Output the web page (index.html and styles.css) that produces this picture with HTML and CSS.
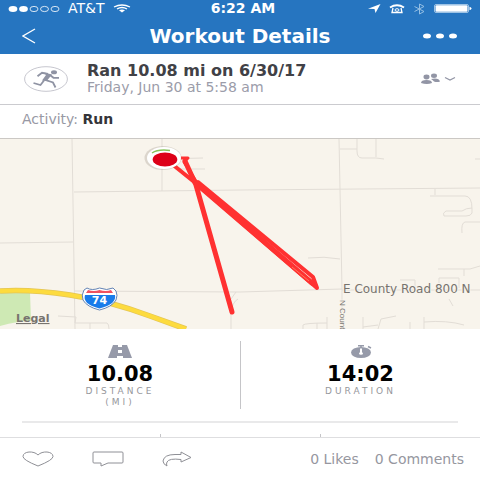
FILE: index.html
```html
<!DOCTYPE html>
<html lang="en">
<head>
<meta charset="utf-8">
<meta name="viewport" content="width=device-width, initial-scale=1">
<title>Workout Details</title>
<link rel="stylesheet" href="styles.css">
</head>
<body>
<header class="top">
  <div class="status">
    <div class="carrier">
      <svg width="52" height="8" viewBox="0 0 52 8" aria-hidden="true">
        <g fill="#fff"><ellipse cx="5" cy="4" rx="4.4" ry="3"/><ellipse cx="15.500" cy="4" rx="4.400" ry="3"/></g>
        <g fill="none" stroke="#fff" stroke-width=".8"><ellipse cx="26" cy="4" rx="4" ry="2.600"/><ellipse cx="36.500" cy="4" rx="4" ry="2.600"/><ellipse cx="47" cy="4" rx="4" ry="2.600"/></g>
      </svg>
      <span>AT&amp;T</span>
      <svg width="18" height="9" viewBox="0 0 18 9" fill="none" stroke="#fff" aria-hidden="true">
        <path d="M1 3Q9-1 17 3" stroke-width="1.300"/><path d="M4 5Q9 2 14 5" stroke-width="1.400"/><path d="M6 6.300Q9 4.600 12 6.300L9 8.500Z" fill="#fff" stroke="none"/>
      </svg>
    </div>
    <span class="clock">6:22 AM</span>
    <div class="indicators">
      <svg width="13" height="9" viewBox="0 0 13 9" aria-hidden="true"><path d="M0 4.700 12.500 0 7.500 9 6.500 5Z" fill="#fff"/></svg>
      <svg width="16" height="10" viewBox="0 0 16 10" fill="none" stroke="#fff" aria-hidden="true"><path d="M1 3.500Q8-1 15 3.500" stroke-width="2"/><path d="M4 4 3 8.500H13L12 4" stroke-width="1.300"/><ellipse cx="8" cy="6" rx="2" ry="1.300"/></svg>
      <svg width="13" height="12" viewBox="0 0 13 12" fill="none" stroke="#94bfe4" aria-hidden="true"><path d="M1.500 3.500 11 8.500 6.500 11V1L11 3.500 1.500 8.500"/></svg>
      <svg width="38" height="9" viewBox="0 0 38 9" aria-hidden="true"><rect x=".5" y=".5" width="34" height="8" rx="1.500" fill="none" stroke="#d3e5f5" stroke-width=".7"/><rect x="1.500" y="1.300" width="32" height="6.400" rx="1" fill="#fff"/><path d="M35.500 2.800Q37.500 3.200 37.500 4.500T35.500 6.200Z" fill="#fff"/></svg>
    </div>
  </div>
  <nav class="nav">
    <button class="icon-button back" aria-label="Back"><svg width="14" height="16" viewBox="0 0 14 16" fill="none" stroke="#fff" stroke-width="1.300"><path d="M13 1 1 8 13 15"/></svg></button>
    <h1>Workout Details</h1>
    <button class="icon-button more" aria-label="More options"><svg width="36" height="6" viewBox="0 0 36 6" fill="#fff"><ellipse cx="5" cy="3" rx="4" ry="2.500"/><ellipse cx="18" cy="3" rx="4" ry="2.500"/><ellipse cx="31" cy="3" rx="4" ry="2.500"/></svg></button>
  </nav>
</header>
<main>
  <section class="summary">
    <svg width="44" height="26" viewBox="0 0 44 26" fill="none" aria-hidden="true">
      <ellipse cx="22" cy="13" rx="21.400" ry="12.300" stroke="#bfbfc8" stroke-width=".9"/>
      <ellipse cx="30" cy="6.300" rx="3" ry="2" fill="#8f93a3"/>
      <path d="M20 6.500 28 8.500 23.500 14 26 15.500 18 14.500 22 9Z" fill="#8f93a3"/>
      <path d="M24 8 18 6.800 13.500 10.300M26 9 29.500 11.800H35M20 13.500 29 16.500 31.500 21.500M20 14.500 16.500 19 9.500 17" stroke="#8f93a3" stroke-width="1.800"/>
    </svg>
    <div class="summary-text">
      <h2>Ran 10.08 mi on 6/30/17</h2>
      <p>Friday, Jun 30 at 5:58 am</p>
    </div>
    <button class="icon-button" aria-label="Privacy: friends">
      <svg width="36" height="12" viewBox="0 0 36 12" fill="#9295a5"><ellipse cx="6.500" cy="4" rx="3" ry="2.400"/><ellipse cx="14" cy="2.700" rx="3" ry="2.200"/><path d="M1 10Q1 7 6.500 7T12 10Q7 12 1 10ZM11 6Q19 4.500 20 8.500 17 9.500 14 8.500 13 7 11 6Z"/><path d="M25 4.500 30 7 35 4.500" fill="none" stroke="#9295a5" stroke-width="1.200"/></svg>
    </button>
  </section>
  <p class="activity">Activity: <strong>Run</strong></p>
  <section class="map" aria-label="Route map">
    <svg viewBox="0 0 480 190" preserveAspectRatio="xMidYMid slice">
      <path fill="#f8f4ec" d="M0 0H480V190H0Z"/>
      <path fill="#cee9b4" d="M0 153H30L31 182Q18 182 0 187Z"/>
      <g fill="none" stroke="#e2ddd6" stroke-width="1">
        <path d="M72 0 75 190M162 0V52M74 53 240 51 480 49M0 104 73 103M75 152 240 153 342 150M339 0 342 150V190M342 151H480M162 20 203 19M175 30H205"/>
        <path d="M340 10H357M357 0V12Q357 19 362 19H376L384 20M376 0V18M475 20H480M435 50V56M430 57H465Q472 57 472 70V74Q471 77 466 77H444Q442 74 446 72H462Q466 69 472 69M462 94Q461 84 465 83H480M308 119Q324 117 340 120M438 130H470L480 127M464 130V137M400 141H415V149M439 150V139H459V149M449 160 453 167M75 184 76 178 58 177M75 184H107Q109 185 109 190M90 184V190M231 160 236 153M231 190V175Q232 163 238 160M303 190V186Q305 184 327 184M317 184V190M327 178V190M363 178V190M378 190 381 180 396 177M378 186 363 188M410 183V190M424 178V190M424 183Q447 181 464 186"/>
      </g>
      <path d="M0 152Q30 150 70 156T150 177L186 190" fill="none" stroke="#e3c557" stroke-width="5.600"/>
      <path d="M0 152Q30 150 70 156T150 177L186 190" fill="none" stroke="#fddb3e" stroke-width="4.200"/>
      <path d="M84 151 87 149Q92 152 99.500 149 107 152 113 149L116 152Q118 156 116 161 112 168 99.500 171 87 168 83 161 81 156 84 151Z" fill="#fff" stroke="#6484b5"/>
      <path d="M86 154 88 151Q94 153 99.500 151 106 153 111 151L113 154Z" fill="#ef5261"/>
      <path d="M85 156H115Q117 165 99.500 169.500 82 165 85 156Z" fill="#187bea"/>
      <text class="shield" x="99.500" y="165" text-anchor="middle">74</text>
      <text class="place" x="16" y="183">Legal</text>
      <text class="road" x="343" y="154">E County Road 800 N</text>
      <text class="cross-road" transform="translate(340 161) rotate(90)">N Count</text>
      <g fill="none" stroke="#ff3131" stroke-linejoin="round" stroke-linecap="round">
        <path d="M167 21 198 46 317 149 313 138 198 43" stroke-width="4"/>
        <path d="M199 47 312 144" stroke-width="5"/>
        <path d="M181 19H188L184 23 199 47" stroke-width="3"/>
        <path d="M185 22 196 46 232 173" stroke-width="5"/>
      </g>
      <path d="M292 128 309 142" stroke="#ff7659" stroke-width="1"/>
      <ellipse cx="163" cy="19" rx="18.500" ry="12" fill="#867c70" opacity=".25"/>
      <ellipse cx="164" cy="19" rx="17" ry="11" fill="#fff"/>
      <path d="M152 14Q158 10 170 11.500" fill="none" stroke="#86c55b" stroke-width="1.500"/>
      <ellipse cx="165" cy="20.500" rx="12.300" ry="7" fill="#dd0018"/>
    </svg>
  </section>
  <section class="stats">
    <div class="stat">
      <svg width="24" height="13" viewBox="0 0 24 13" aria-hidden="true"><path d="M5 0H19L24 13H0Z" fill="#969aa9"/><path d="M10 0H14V2H10ZM10 5H14V8H10ZM9 11H15V13H9Z" fill="#fff"/></svg>
      <strong>10.08</strong><span>DISTANCE<br>(MI)</span>
    </div>
    <div class="stat">
      <svg width="22" height="13" viewBox="0 0 22 13" aria-hidden="true"><ellipse cx="11" cy="7.500" rx="10" ry="5.500" fill="#969aa9"/><path d="M8 .8H14M11 1V4M18 1.500 21 3" stroke="#969aa9" stroke-width="1.500"/><path d="M11 3.500V8" stroke="#fff" stroke-width="2"/><ellipse cx="11" cy="8.500" rx="2" ry="1.200" fill="#fff"/></svg>
      <strong>14:02</strong><span>DURATION</span>
    </div>
  </section>
  <hr class="divider">
  <div class="more-stats"><div></div><div></div><div></div></div>
</main>
<footer class="actions">
  <button class="icon-button" aria-label="Like"><svg width="32" height="16" viewBox="0 0 32 16" fill="none" stroke="#8f9096"><path d="M16 15Q1 9 1 5.500C1 0 12-.5 16 4 20-.5 31 0 31 5.500Q31 9 16 15Z"/></svg></button>
  <button class="icon-button" aria-label="Comment"><svg width="32" height="16" viewBox="0 0 32 16" fill="none" stroke="#8f9096"><path d="M2 1H30Q31 1 31 2V11Q31 12 30 12H16L9 15V12H2Q1 12 1 11V2Q1 1 2 1Z"/></svg></button>
  <button class="icon-button" aria-label="Share"><svg width="30" height="16" viewBox="0 0 30 16" fill="none" stroke="#8f9096"><path d="M19 1 29 6.500 19 11V8.500Q7 7 5 11 4 13 5 15 1 13 1 10 2 3.500 13 3.500H19Z"/></svg></button>
  <div class="counts"><a href="#likes">0 Likes</a><a href="#comments">0 Comments</a></div>
</footer>
</body>
</html>
```
FILE: styles.css
```css
* { box-sizing: border-box; }
body {
  margin: 0;
  min-height: 100vh;
  display: flex;
  flex-direction: column;
  background: #fff;
  color: #414146;
  font-family: "DejaVu Sans", sans-serif;
}
h1, h2, p { margin: 0; }
svg { display: block; flex-shrink: 0; }
.icon-button { border: 0; padding: 0; background: none; cursor: pointer; }

.top { background: #2675c0; color: #fff; }
.status {
  display: grid;
  grid-template-columns: 1fr auto 1fr;
  align-items: center;
  height: 17px;
  padding: 0 8px;
  font-size: 14px;
  line-height: 17px;
}
.carrier, .indicators { display: flex; align-items: center; }
.carrier { gap: 8px; }
.clock { padding-left: 6px; font-weight: bold; }
.indicators { justify-content: flex-end; gap: 8px; }
.nav {
  display: grid;
  grid-template-columns: 1fr auto 1fr;
  align-items: center;
  height: 37px;
  padding: 0 22px;
}
.nav h1 { font-size: 20px; line-height: 36px; }
.back { justify-self: start; }
.more { justify-self: end; }

main { flex: 1; display: flex; flex-direction: column; }
.summary {
  display: flex;
  align-items: center;
  height: 51px;
  padding: 0 24px;
  border-bottom: 1px solid #cbcbcf;
}
.summary-text { flex: 1; padding-left: 19px; }
.summary h2 { font-size: 16px; line-height: 16px; }
.summary p { font-size: 14px; line-height: 16px; color: #9b9ca9; }
.activity {
  height: 33px;
  padding: 0 22px;
  font-size: 14px;
  line-height: 28px;
  color: #9899a4;
}
.activity strong { color: #343439; }

.map { height: 191px; border-top: 1px solid #cbc8c4; }
.map svg { width: 100%; height: 100%; }
.map text { font-size: 12px; fill: #77736e; }
.map .shield { fill: #fff; font-size: 11px; font-weight: bold; }
.map .place { font-size: 11px; font-weight: bold; text-decoration: underline; }
.map .cross-road { font-family: "Liberation Sans Narrow", "Liberation Sans", sans-serif; font-size: 8px; }
.map .road, .map .cross-road { paint-order: stroke; stroke: #f8f4ec; stroke-width: 2px; }

.stats {
  display: grid;
  grid-template-columns: 1fr 1fr;
  padding: 12px 0;
}
.divider {
  width: auto;
  margin: 0 22px;
  border: 0;
  border-top: 2px solid #e9e9ea;
}
.stat {
  display: flex;
  flex-direction: column;
  align-items: center;
  height: 68px;
  padding-top: 4px;
  text-align: center;
}
.stat + .stat { border-left: 1px solid #c5c5c8; }
.stat strong { margin-top: 4px; font-size: 21px; line-height: 24px; color: #000; }
.stat span {
  font-size: 9px;
  line-height: 11px;
  letter-spacing: 3px;
  color: #96979c;
}
.more-stats {
  display: grid;
  grid-template-columns: repeat(3, 1fr);
  flex: 1;
  padding-top: 11px;
}
.more-stats div + div { border-left: 1px solid #c5c5c8; }

.actions {
  display: flex;
  align-items: center;
  gap: 38px;
  height: 43px;
  padding: 0 16px 0 22px;
  border-top: 1px solid #dedee0;
}
.counts { display: flex; gap: 16px; margin-left: auto; }
.counts a { font-size: 14px; color: #96979f; text-decoration: none; }
```
